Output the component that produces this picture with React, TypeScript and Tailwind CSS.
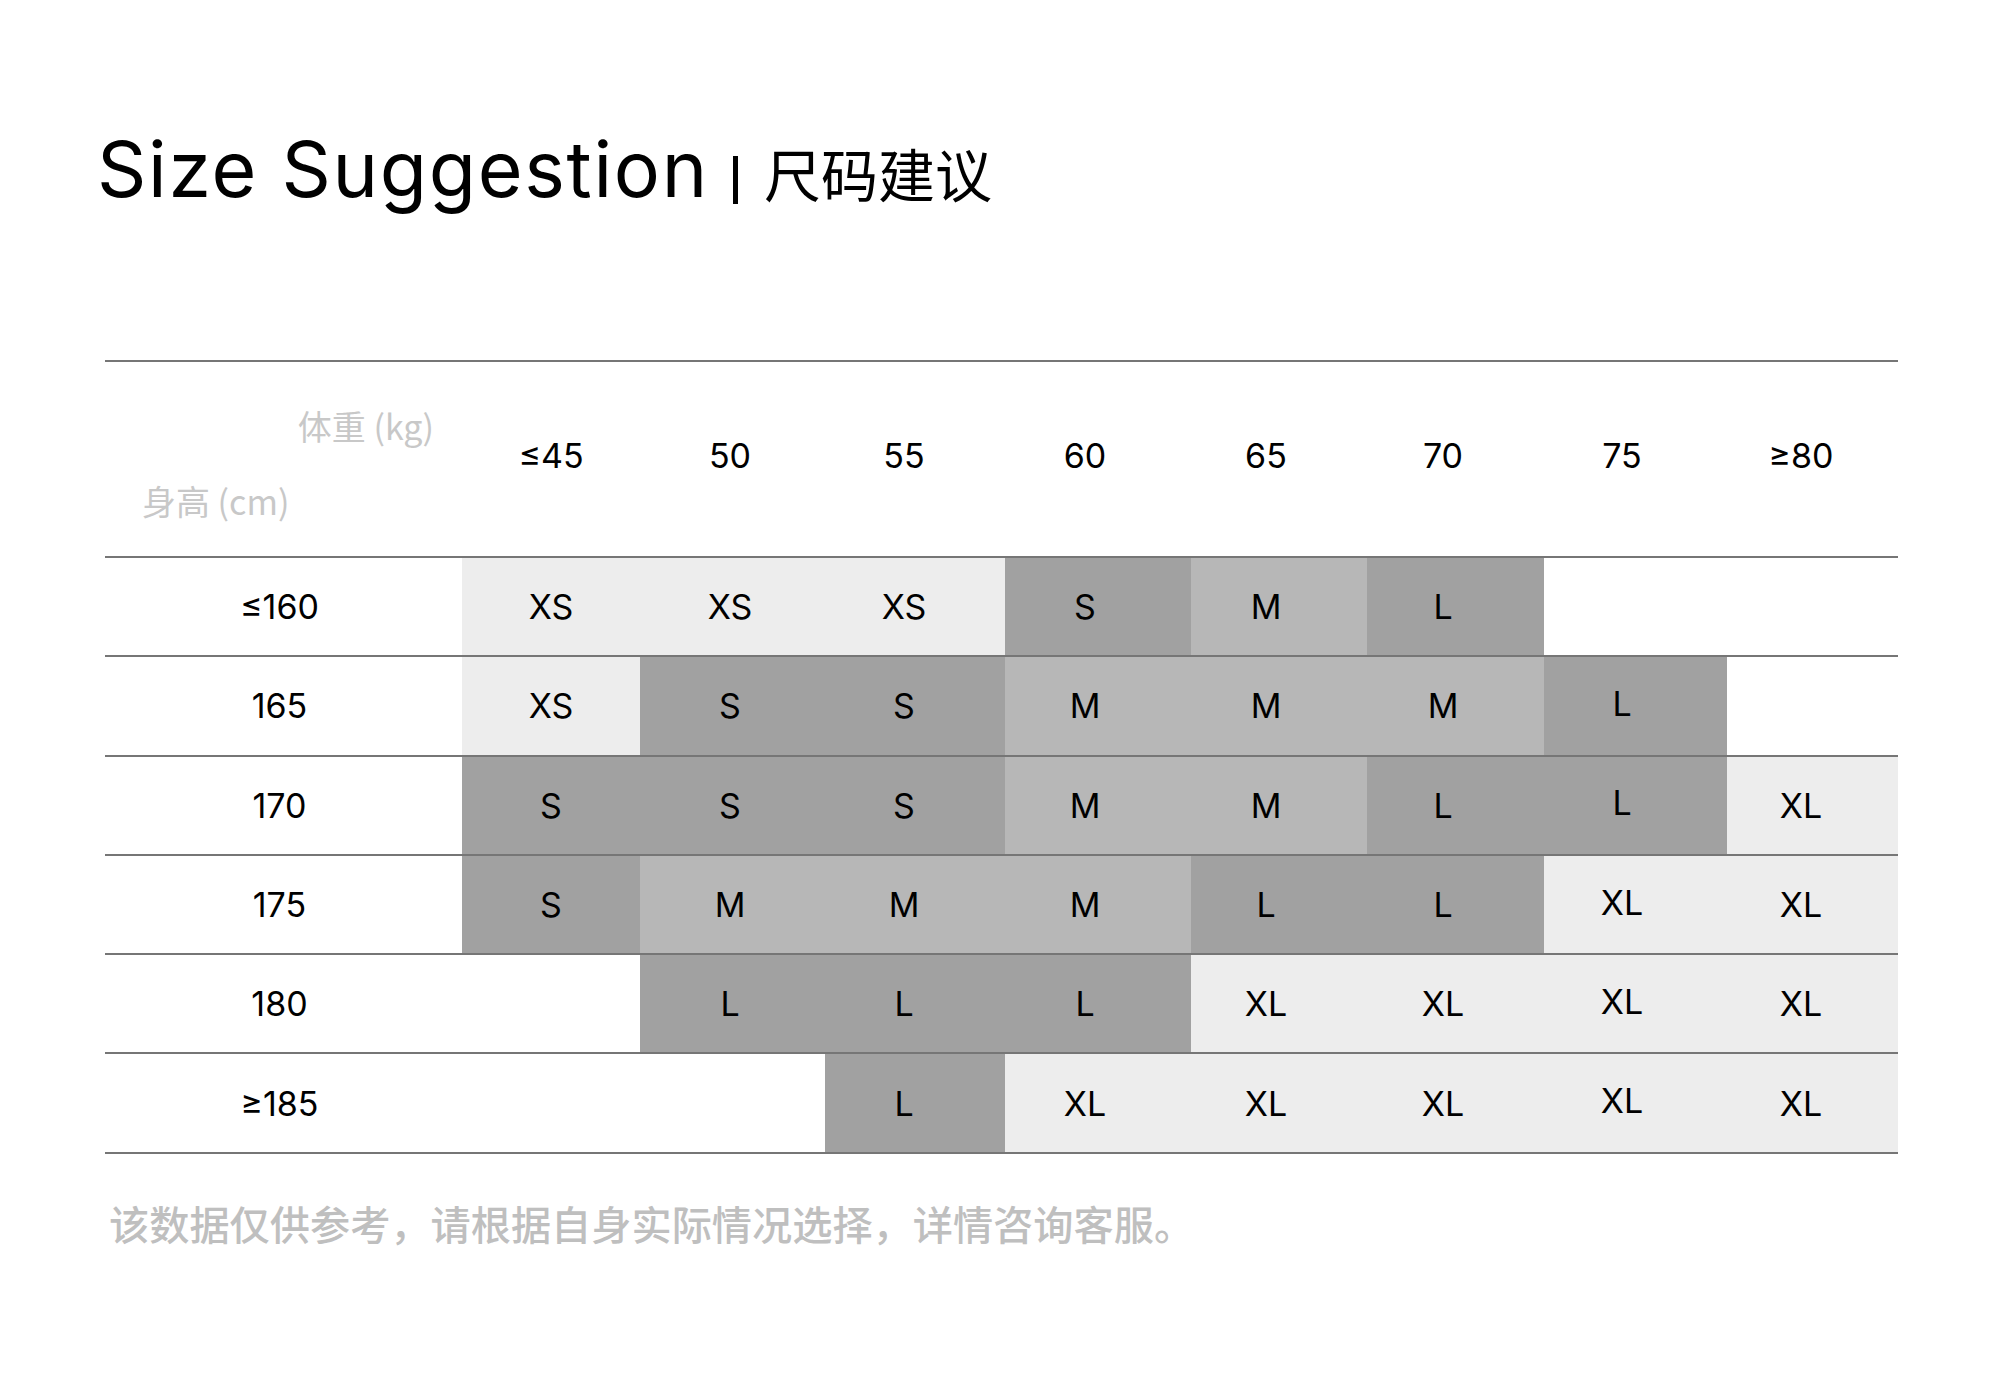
import React from "react";

type Size = "XS" | "S" | "M" | "L" | "XL" | "";

const bgFor: Record<string, string> = {
  XS: "bg-[#ededed]",
  XL: "bg-[#ededed]",
  S: "bg-[#a1a1a1]",
  L: "bg-[#a1a1a1]",
  M: "bg-[#b7b7b7]",
  "": "bg-white",
};

const headPad = [
  "pr-[0px]",
  "pr-[5px]",
  "pr-[22px]",
  "pr-[26px]",
  "pr-[26px]",
  "pr-[25px]",
  "pr-[27px]",
  "pr-[23px]",
];

const colPad = [
  "pr-[0px]",
  "pr-[5px]",
  "pr-[22px]",
  "pr-[26px]",
  "pr-[26px]",
  "pr-[25px]",
  "pr-[27px] pb-[5px]",
  "pr-[23px]",
];

const weights = ["≤45", "50", "55", "60", "65", "70", "75", "≥80"];

const rows: { label: string; cells: Size[] }[] = [
  { label: "≤160", cells: ["XS", "XS", "XS", "S", "M", "L", "", ""] },
  { label: "165", cells: ["XS", "S", "S", "M", "M", "M", "L", ""] },
  { label: "170", cells: ["S", "S", "S", "M", "M", "L", "L", "XL"] },
  { label: "175", cells: ["S", "M", "M", "M", "L", "L", "XL", "XL"] },
  { label: "180", cells: ["", "L", "L", "L", "XL", "XL", "XL", "XL"] },
  { label: "≥185", cells: ["", "", "L", "XL", "XL", "XL", "XL", "XL"] },
];

const gridCols =
  "grid grid-cols-[357px_178px_185px_180px_186px_176px_177px_183px_171px]";

export default function App() {
  return (
    <div className="w-[2000px] h-[1383px] bg-white text-black font-['Inter','Noto_Sans_CJK_SC',sans-serif]">
      <div className="pl-[97px] pt-[131px] flex items-baseline leading-none">
        <span className="text-[77px] tracking-[1.7px]">Size Suggestion</span>
        <span className="ml-[24px] mr-[26px] inline-block w-[5px] h-[48px] bg-black self-end mb-[4px]" />
        <span className="text-[57px] font-normal font-['Noto_Sans_CJK_SC',sans-serif]">尺码建议</span>
      </div>

      <div className="ml-[105px] w-[1793px] mt-[152px] border-t-2 border-b-2 border-[#767676]">
        <div className={`${gridCols} h-[194px]`}>
          <div className="flex flex-col justify-center text-[34px] text-[#c8c8c8] font-['Noto_Sans_CJK_SC',sans-serif] leading-none">
            <div className="text-right pr-[28px] mt-[8px]">体重 (kg)</div>
            <div className="pl-[37px] mt-[41px]">身高 (cm)</div>
          </div>
          {weights.map((w, i) => (
            <div
              key={w}
              className={`flex items-center justify-center text-[34px] pb-[8px] ${headPad[i]}`}
            >
              {w}
            </div>
          ))}
        </div>
        {rows.map((r) => (
          <div
            key={r.label}
            className={`${gridCols} h-[99.3px] border-t-2 border-[#767676]`}
          >
            <div className="flex items-center justify-center text-[34px] pr-[8px]">
              {r.label}
            </div>
            {r.cells.map((c, i) => (
              <div
                key={i}
                className={`flex items-center justify-center text-[34px] ${bgFor[c]} ${colPad[i]}`}
              >
                {c}
              </div>
            ))}
          </div>
        ))}
      </div>

      <div className="pl-[109px] mt-[49px] text-[40.2px] text-[#bfbfbf] font-medium font-['Noto_Sans_CJK_SC',sans-serif] leading-none">
        该数据仅供参考，请根据自身实际情况选择，详情咨询客服。
      </div>
    </div>
  );
}
